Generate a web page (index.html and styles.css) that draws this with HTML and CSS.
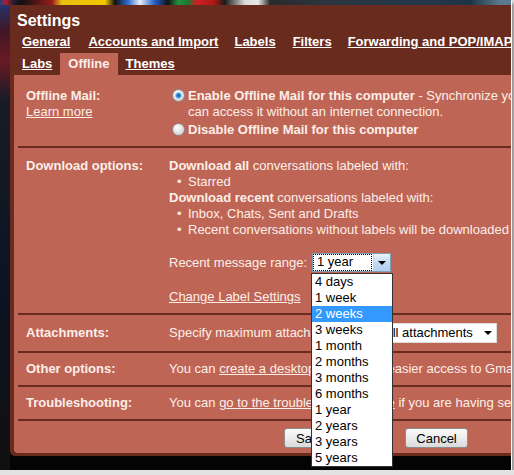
FILE: index.html
```html
<!DOCTYPE html>
<html lang="en">
<head>
    <meta charset="UTF-8">
    <title>Settings - Offline</title>
    <link rel="stylesheet" href="styles.css">
</head>
<body>
    <div class="screen">
        <div class="settings">
            <h2 class="title">Settings</h2>
            <div class="tabs top"><a href="#">General</a><a href="#">Accounts and Import</a><a href="#">Labels</a><a href="#">Filters</a><a href="#">Forwarding and POP/IMAP</a><a href="#">Chat</a></div>
            <div class="tabs"><a href="#">Labs</a><span class="current">Offline</span><a href="#">Themes</a></div>

            <div class="panel">
                <div class="row first">
                    <div class="label">Offline Mail:<br><a href="#">Learn more</a></div>
                    <div class="value">
                        <div class="option">
                            <span class="radio checked"></span>
                            <div><b>Enable Offline Mail for this computer</b> - Synchronize your mail to this computer so that you<br>can access it without an internet connection.</div>
                        </div>
                        <div class="option">
                            <span class="radio"></span>
                            <div><b>Disable Offline Mail for this computer</b></div>
                        </div>
                    </div>
                </div>

                <div class="row download">
                    <div class="label">Download options:</div>
                    <div class="value">
                        <div><b>Download all</b> conversations labeled with:</div>
                        <div class="bullet">Starred</div>
                        <div><b>Download recent</b> conversations labeled with:</div>
                        <div class="bullet">Inbox, Chats, Sent and Drafts</div>
                        <div class="bullet">Recent conversations without labels will be downloaded</div>
                        <div class="range">
                            Recent message range:
                            <div class="select">
                                <span class="val">1 year</span>
                                <span class="drop"></span>
                            </div>
                        </div>
                        <div class="change"><a href="#">Change Label Settings</a></div>
                    </div>
                </div>

                <div class="row attach">
                    <div class="label">Attachments:</div>
                    <div class="value">
                        <span class="clip">Specify maximum attachment size to download:</span>
                        <div class="select-plain">
                            <span>All attachments</span>
                            <span class="arrow"></span>
                        </div>
                    </div>
                </div>

                <div class="row">
                    <div class="label">Other options:</div>
                    <div class="value">You can <a href="#">create a desktop shortcut</a> for easier access to Gmail offline.</div>
                </div>

                <div class="row">
                    <div class="label">Troubleshooting:</div>
                    <div class="value">You can <a href="#">go to the troubleshooting page</a> if you are having serious problems with Offline Mail.</div>
                </div>

                <div class="row buttons">
                    <button>Save Changes</button>
                    <button class="cancel">Cancel</button>
                </div>
            </div>
        </div>

        <ul class="menu">
            <li>4 days</li>
            <li>1 week</li>
            <li class="sel">2 weeks</li>
            <li>3 weeks</li>
            <li>1 month</li>
            <li>2 months</li>
            <li>3 months</li>
            <li>6 months</li>
            <li>1 year</li>
            <li>2 years</li>
            <li>3 years</li>
            <li>5 years</li>
        </ul>
    </div>
</body>
</html>
```

FILE: styles.css
```css
body {
    margin: 0;
    background: #e2e2e2;
    font-family: "Liberation Sans", Arial, sans-serif;
    font-size: 13px;
}
.screen {
    position: relative;
    width: 511px;
    height: 470px;
    padding: 5px 0 0 10px;
    box-sizing: border-box;
    overflow: hidden;
    background:
        linear-gradient(to right, #2a3c86 0, #b01c28 6px, #1a1e30 14px, #111 22px, #9a1c1c 52px, #e8c010 62px, #f2c800 105px, #111 115px, #2f6ad0 128px, #e8eef8 140px, #1f5cc4 155px, #111 168px, #22903c 178px, #1a7a30 188px, #cc2222 196px, #b01818 214px, #1a1a1a 225px, #dcdcdc 245px, #e8e8e8 258px, #2a2a2a 270px, #2c3642 330px, #24384a 420px, #1e3446 470px, #5a7a8e 500px) 0 0 / 100% 5px no-repeat,
        linear-gradient(#203a7a 0, #401628 30px, #6a1a24 60px, #181c28 100px, #0c1220 300px, #101010 100%) 0 0 / 10px 100% no-repeat,
        #040404;
    box-shadow: 1px 1px 0 #fff, 3px 3px 3px #8a8a8a;
}
.settings {
    width: 620px;
    padding: 0 0 3px 4px;
    background: #6a2b1f;
    border-radius: 0 0 0 5px;
}
.title {
    margin: 0;
    padding: 5px 0 0 3px;
    font-size: 16px;
    line-height: 21px;
    color: #fff;
}
.tabs {
    white-space: nowrap;
    line-height: 22px;
    font-weight: bold;
}
.tabs a, .tabs span {
    display: inline-block;
    padding: 0 8px;
    color: #fff;
}
.tabs.top a:first-child {
    margin-right: 2px;
}
.tabs.top a:nth-child(4) {
    margin-left: 1px;
}
.tabs .current {
    background: #bf6556;
    color: #fcefe8;
}
a {
    color: #fcefe8;
}
.panel {
    background: #bf6556;
    color: #fcefe8;
    border-radius: 0 0 0 4px;
}
.row {
    display: flex;
    margin-left: 4px;
    padding: 8px 0;
    border-top: 2px solid #6a2b1f;
    line-height: 16px;
    white-space: nowrap;
}
.row.first {
    border-top: none;
    padding: 13px 0 8px;
}
.label {
    flex: none;
    width: 143px;
    padding-left: 8px;
    font-weight: bold;
}
.label a {
    font-weight: normal;
}
.option {
    display: flex;
}
.option + .option {
    margin-top: 2px;
}
.radio {
    flex: none;
    width: 11px;
    height: 11px;
    margin: 1px 3px 0 3px;
    border: 1px solid #8b8b8b;
    border-radius: 50%;
    background: radial-gradient(circle at 40% 35%, #fff, #e0e0e0 55%, #c2c2c2);
}
.radio.checked {
    background:
        radial-gradient(circle at 50% 50%, #1d5aa0 0, #3f8ad6 2px, #8fd0ff 3px, transparent 3.6px),
        radial-gradient(circle at 40% 35%, #fff, #e0e0e0 55%, #c2c2c2);
}
.bullet::before {
    content: "•";
    display: inline-block;
    width: 11px;
    margin-left: 8px;
}
.download {
    padding-top: 10px;
}
.range {
    display: flex;
    align-items: center;
    height: 19px;
    margin-top: 15px;
}
.select {
    display: flex;
    width: 77px;
    height: 17px;
    margin-left: 5px;
    border: 1px solid #7f9db9;
    background: #fff;
    color: #000;
}
.select .val {
    flex: 1;
    margin: 1px 2px 1px 1px;
    padding-left: 3px;
    line-height: 13px;
    outline: 1px dotted #000;
    outline-offset: 0;
}
.select .drop {
    display: flex;
    align-items: center;
    justify-content: center;
    width: 16px;
    border-left: 1px solid #c3d6ec;
    background: linear-gradient(#eaf3fc, #c4dbf2 50%, #b3cfee);
}
.select .drop::after, .select-plain .arrow {
    content: "";
    border: 4px solid transparent;
    border-top: 4px solid #000;
    border-bottom: 0;
}
.change {
    margin-top: 17px;
}
.attach .label {
    line-height: 20px;
}
.attach .value {
    display: flex;
    align-items: center;
}
.clip {
    display: inline-block;
    width: 211px;
    overflow: hidden;
}
.select-plain {
    display: flex;
    align-items: center;
    width: 112px;
    height: 18px;
    padding-left: 3px;
    border: 1px solid #dcdcdc;
    background: #fff;
    color: #000;
}
.select-plain .arrow {
    margin-left: auto;
    margin-right: 4px;
}
.buttons {
    padding: 7px 0 5px 266px;
}
button {
    height: 20px;
    padding: 0 11px;
    border: 1px solid #8c8c8c;
    border-radius: 3px;
    background: linear-gradient(#fbfbfb, #ececec 50%, #dadada);
    font-family: inherit;
    font-size: 13px;
    color: #000;
}
.cancel {
    margin-left: 12px;
    padding: 0 10px;
}
.menu {
    position: absolute;
    left: 311px;
    top: 273px;
    width: 80px;
    margin: 0;
    padding: 0;
    list-style: none;
    border: 1px solid #333;
    background: #fff;
    color: #000;
}
.menu li {
    line-height: 16px;
    padding-left: 3px;
}
.menu .sel {
    background: #3399ff;
    color: #fff;
}
```
